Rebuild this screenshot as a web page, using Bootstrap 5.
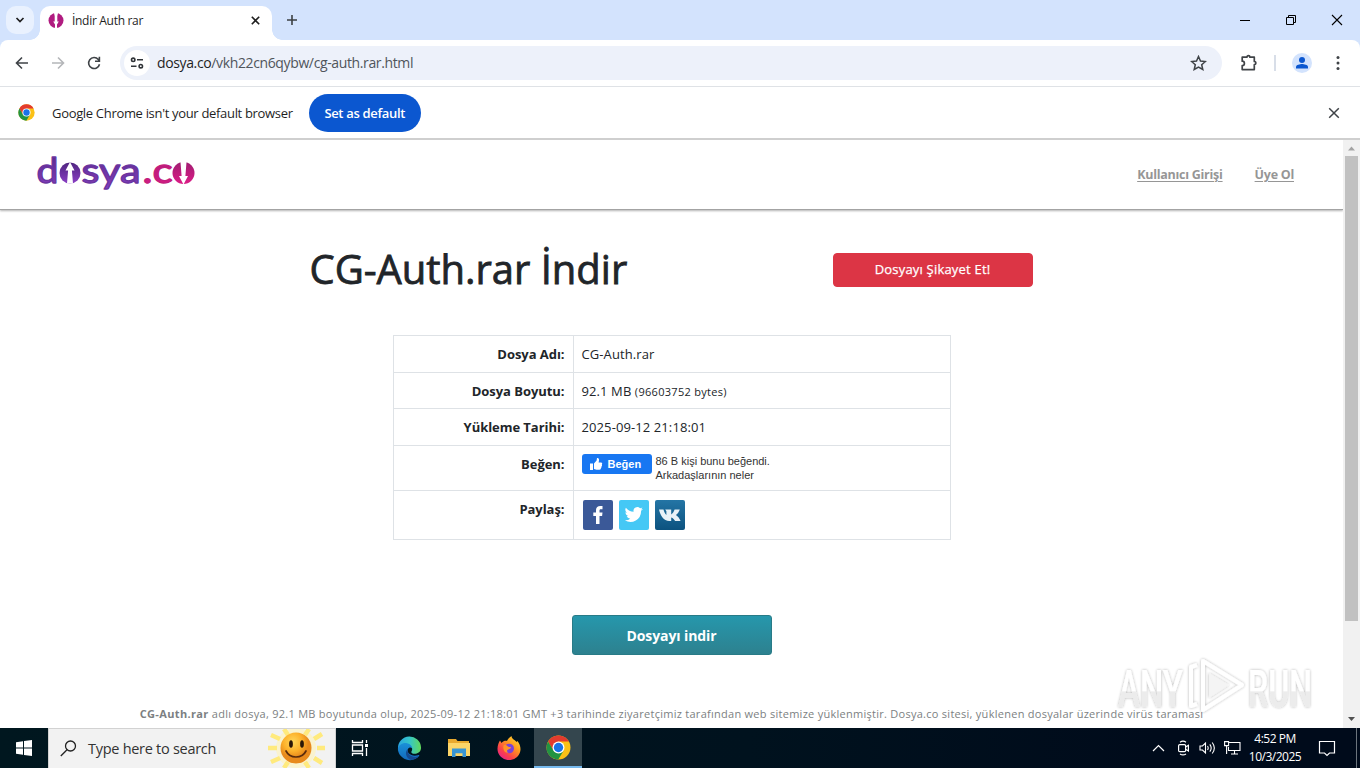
<!DOCTYPE html>
<html lang="tr">
<head>
  <meta charset="UTF-8" />
  <meta name="viewport" content="width=device-width, initial-scale=1.0"/>
  <title>İndir Auth rar</title>
  <link href="https://cdn.jsdelivr.net/npm/bootstrap@5.3.3/dist/css/bootstrap.min.css" rel="stylesheet"/>
  <style>
    body {
      font-family: "Open Sans", "Noto Sans", sans-serif;
      font-size: 13px;
      color: #212529;
      height: 768px;
      overflow: hidden;
    }
    svg {
      display: block;
      flex-shrink: 0;
    }

    /* browser tabs */
    .tab-strip {
      height: 40px;
      background: #d3e3fd;
      padding-left: 6px;
    }
    .tab-search {
      width: 28px;
      height: 28px;
      margin-top: 6px;
      border-radius: 10px;
      background: #e9f1fe;
    }
    .browser-tab {
      width: 232px;
      height: 34px;
      margin: 6px 0 0 6px;
      padding: 0 11px 5px 8px;
      background: #fff;
      border-radius: 10px 10px 0 0;
      font-size: 12px;
      letter-spacing: -.3px;
      color: #1f1f1f;
      position: relative;
    }
    .browser-tab::before, .browser-tab::after {
      content: "";
      position: absolute;
      bottom: 0;
      width: 10px;
      height: 10px;
    }
    .browser-tab::before {
      left: -10px;
      background: radial-gradient(circle at 0 0, transparent 9.5px, #fff 10px);
    }
    .browser-tab::after {
      right: -10px;
      background: radial-gradient(circle at 100% 0, transparent 9.5px, #fff 10px);
    }
    .new-tab {
      margin-left: 14px;
    }
    .window-buttons {
      gap: 34px;
      padding-right: 17px;
    }

    /* address bar */
    .toolbar-wrap {
      background: #d3e3fd;
    }
    .tool-row {
      height: 47px;
      background: #fff;
      border-bottom: 1px solid #dfe2e6;
      border-radius: 8px 8px 0 0;
      padding: 0 14px;
    }
    .nav-icons {
      gap: 20px;
    }
    .address {
      width: 1102px;
      height: 34px;
      border-radius: 17px;
      background: #edf1fa;
      margin: 0 17px 0 18px;
      padding: 0 15px 0 4px;
      font-size: 14px;
      letter-spacing: -.37px;
      color: #50555b;
    }
    .address span {
      padding-bottom: 1px;
    }
    .address b {
      font-weight: 400;
      color: #1f1f1f;
    }
    .site-info {
      width: 26px;
      height: 26px;
      background: #fff;
      margin-right: 7px;
    }
    .tool-split {
      width: 2px;
      height: 16px;
      background: #d8dee8;
      margin: 0 16px 0 15px;
    }
    .kebab {
      margin-left: 24px;
    }
    .info-bar {
      height: 53px;
      padding: 0 20px 0 18px;
      border-bottom: 2px solid #cfcfcf;
      letter-spacing: -.32px;
      color: #1f1f1f;
    }
    .info-bar span {
      padding-top: 2px;
      margin-left: 17px;
    }
    .btn-default-browser {
      width: 112px;
      height: 38px;
      padding: 2px 0 0;
      border: 0;
      background: #0b57d0;
      color: #fff;
      font-size: 13px;
      font-weight: 600;
      letter-spacing: -.33px;
    }

    /* web page */
    .viewport {
      height: 588px;
      overflow: hidden;
    }
    .site-header {
      height: 70px;
      padding: 0 49px 0 36px;
      border-bottom: 1px solid #a3a3a3;
      box-shadow: 0 1px 2px rgba(0,0,0,.3);
    }
    .site-header nav {
      gap: 32px;
      padding-top: 2px;
    }
    .site-header a {
      color: #969696;
      font-weight: 700;
      font-size: 12.5px;
      letter-spacing: -.26px;
      text-underline-offset: 2px;
    }
    .file-area {
      width: 724px;
      margin: 35px auto 0;
    }
    .title-row {
      margin: 0 1px 0 0;
    }
    .file-area h1 {
      font-size: 40px;
      font-weight: 500;
      line-height: 48px;
      letter-spacing: -.03px;
      margin: 0;
      -webkit-text-stroke: .8px #212529;
    }
    .btn-report {
      width: 200px;
      height: 34px;
      padding: 0;
      margin-top: 2px;
      font-size: 13px;
      font-weight: 500;
      letter-spacing: .2px;
      border-radius: 4px;
      -webkit-text-stroke: .25px #fff;
    }
    .file-table {
      width: 558px;
      margin: 42px auto 0;
      font-size: 13px;
      line-height: 19.5px;
      border-color: #dee2e6;
    }
    .file-table th {
      width: 180px;
      text-align: right;
      vertical-align: top;
      letter-spacing: -.05px;
    }
    .file-table th, .file-table .file-value {
      padding: 9px 8px 7px;
    }
    .file-table td {
      letter-spacing: .1px;
    }
    .file-table small {
      font-size: 11px;
      line-height: 11px;
      letter-spacing: .3px;
    }
    .like-row {
      height: 28px;
    }
    .like-btn {
      width: 70px;
      height: 20px;
      padding-left: 7px;
      gap: 5px;
      border-radius: 3px;
      background: #1877f2;
      color: #fff;
      font: bold 11px "Liberation Sans", sans-serif;
      letter-spacing: 0;
    }
    .like-text {
      font: 11px/14px "Liberation Sans", sans-serif;
      letter-spacing: 0;
      color: #333;
      margin-left: 4px;
    }
    .share-row {
      gap: 6px;
      padding: 1px 0 0 1px;
      height: 32px;
    }
    .btn-download {
      width: 200px;
      height: 40px;
      margin-top: 75px;
      padding: 1px 0 0;
      border: 1px solid #287b87;
      border-radius: 3px;
      background: linear-gradient(#2697ac, #2d818f);
      color: #fff;
      font-size: 14px;
      font-weight: 700;
      letter-spacing: -.1px;
    }
    .file-note {
      margin-top: 50px;
      font-size: 11px;
      line-height: 17px;
      letter-spacing: .27px;
      color: #7c7f82;
      white-space: nowrap;
      text-align: center;
    }
    .file-note b {
      letter-spacing: .35px;
    }
    .scroll-track {
      width: 17px;
      background: #f1f1f1;
      padding: 0 2px;
    }
    .scroll-thumb {
      height: 465px;
      background: #c1c1c1;
    }
    .watermark {
      position: absolute;
      left: 1108px;
      top: 650px;
      opacity: .9;
    }

    /* taskbar */
    .win-taskbar {
      height: 40px;
      background: linear-gradient(90deg, #00171f, #00121e 55%, #000b1b 85%);
      color: #fff;
      position: relative;
    }
    .start-btn, .task-item {
      width: 48px;
    }
    .task-item {
      margin-left: 1.6px;
      height: 40px;
    }
    .task-item.open-app {
      background: #34464e;
      border-bottom: 2px solid #76b9ed;
    }
    .search-field {
      width: 288px;
      background: #f2f2f2;
      border: 1px solid #d2d2d2;
      border-bottom: 0;
      padding-left: 11px;
      color: #333;
      font-size: 14.5px;
      letter-spacing: -.28px;
    }
    .search-field span {
      margin-left: 11px;
    }
    .tray-icons {
      gap: 8px;
    }
    .clock {
      width: 68px;
      font-size: 12px;
      line-height: 18px;
      letter-spacing: -.5px;
      text-align: center;
    }
    .notify {
      margin: 0 20px 0 9px;
    }
    .show-desktop {
      width: 4px;
    }
  </style>
</head>
<body>
  <svg width="0" height="0" class="position-absolute">
    <defs>
      <symbol id="chromeLogo" viewBox="0 0 48 48">
        <circle cx="24" cy="24" r="23" fill="#fbc116"/>
        <path d="M4 12.500A23 23 0 0 1 44 12.500H24L14 29.800z" fill="#e33b2e"/>
        <path d="M4 12.500A23 23 0 0 0 23.500 47L34 29.700 14 29.500z" fill="#229342"/>
        <circle cx="24" cy="24" r="11.500" fill="#fff"/>
        <circle cx="24" cy="24" r="9" fill="#1a73e8"/>
      </symbol>
      <linearGradient id="purple" x1="0" y1="0" x2="0" y2="1">
        <stop offset="0" stop-color="#4f2580"/><stop offset="1" stop-color="#8a3fc4"/>
      </linearGradient>
      <linearGradient id="pink" x1="0" y1="0" x2="0" y2="1">
        <stop offset="0" stop-color="#a01d72"/><stop offset="1" stop-color="#dc1c86"/>
      </linearGradient>
    </defs>
  </svg>

  <!-- tab strip -->
  <div class="tab-strip d-flex">
    <div class="tab-search d-flex align-items-center justify-content-center">
      <svg width="10" height="8" viewBox="0 0 10 8"><path d="M1.500 2l3.500 3.500L8.500 2" fill="none" stroke="#1f1f1f" stroke-width="1.700"/></svg>
    </div>
    <div class="browser-tab d-flex align-items-center">
      <svg width="16" height="16" viewBox="0 0 16 16">
        <circle cx="8" cy="7.500" r="7.500" fill="#b01c80"/>
        <path d="M6 0h4L9.300 3v5.500h1.500L9 11.500V15H7v-3.500L5.200 8.500h1.500V3z" fill="#fff"/>
      </svg>
      <span class="ms-2 flex-grow-1">İndir Auth rar</span>
      <svg width="11" height="11" viewBox="0 0 11 11"><path d="M1.800 1.800l7.400 7.400M9.200 1.800L1.800 9.200" stroke="#1f1f1f" stroke-width="1.600"/></svg>
    </div>
    <svg class="new-tab align-self-center" width="12" height="12" viewBox="0 0 12 12"><path d="M6 1v10M1 6h10" stroke="#3c4043" stroke-width="1.600"/></svg>
    <div class="window-buttons ms-auto d-flex align-items-center">
      <svg width="12" height="12" viewBox="0 0 12 12"><path d="M1 6.500h10" stroke="#000"/></svg>
      <svg width="12" height="12" viewBox="0 0 12 12"><path d="M1.500 3.500h7v7h-7zM3.500 3.500v-2h7v7h-2" fill="none" stroke="#000"/></svg>
      <svg width="12" height="12" viewBox="0 0 12 12"><path d="M1 1l10 10M11 1L1 11" stroke="#000" stroke-width="1.100"/></svg>
    </div>
  </div>

  <!-- address row -->
  <div class="toolbar-wrap">
    <div class="tool-row d-flex align-items-center">
      <div class="nav-icons d-flex">
        <svg width="16" height="16" viewBox="0 0 16 16" fill="none" stroke="#3f4347" stroke-width="1.600"><path d="M14 8H3M8 2.500L2.500 8 8 13.500"/></svg>
        <svg width="16" height="16" viewBox="0 0 16 16" fill="none" stroke="#b4b6b9" stroke-width="1.600"><path d="M2 8h11M8 2.500L13.500 8 8 13.500"/></svg>
        <svg width="16" height="16" viewBox="0 0 16 16" fill="none" stroke="#3f4347" stroke-width="1.600"><path d="M13.500 9.200A5.500 5.500 0 1 1 12.300 4.400L13.300 5.800M13.400 1.800v4.500H9"/></svg>
      </div>
      <div class="address d-flex align-items-center">
        <div class="site-info rounded-circle d-flex align-items-center justify-content-center">
          <svg width="14" height="12" viewBox="0 0 14 12" fill="none" stroke="#303438" stroke-width="1.600"><circle cx="3.200" cy="2.800" r="1.700"/><path d="M7 2.800h6M1 9.200h5.500"/><circle cx="10.800" cy="9.200" r="1.700"/></svg>
        </div>
        <span class="flex-grow-1"><b>dosya.co</b>/vkh22cn6qybw/cg-auth.rar.html</span>
        <svg width="17" height="16" viewBox="0 0 17 16"><path d="M8.500 1.500l2 4.500 4.900.5-3.700 3.200 1.100 4.800-4.300-2.500-4.300 2.500 1.100-4.800L1.600 6.500 6.500 6z" fill="none" stroke="#3f4347" stroke-width="1.500"/></svg>
      </div>
      <svg width="20" height="20" viewBox="0 0 20 20"><path d="M3.200 4.200h4.700a1.500 1.500 0 0 1 3 0h4.400v4.300a1.600 1.600 0 0 1 0 3.200v4.900H3.200v-4a2.200 2.200 0 0 0 0-4.400z" fill="none" stroke="#3f4347" stroke-width="1.700" stroke-linejoin="round"/></svg>
      <div class="tool-split"></div>
      <svg width="20" height="20" viewBox="0 0 20 20"><circle cx="10" cy="10" r="10" fill="#d3e3fd"/><circle cx="10" cy="7" r="3" fill="#0b57d0"/><path d="M4 15.500v-1.600c0-2 4-2.900 6-2.900s6 .9 6 2.900v1.600z" fill="#0b57d0"/></svg>
      <svg class="kebab" width="4" height="16" viewBox="0 0 4 16" fill="#3f4347"><circle cx="2" cy="2.500" r="1.500"/><circle cx="2" cy="8" r="1.500"/><circle cx="2" cy="13.500" r="1.500"/></svg>
    </div>
  </div>

  <div class="info-bar d-flex align-items-center">
    <svg width="17" height="17"><use href="#chromeLogo"/></svg>
    <span>Google Chrome isn't your default browser</span>
    <button class="btn btn-default-browser rounded-pill ms-3">Set as default</button>
    <svg class="ms-auto" width="12" height="12" viewBox="0 0 12 12"><path d="M1.200 1.200l9.600 9.600M10.800 1.200L1.200 10.800" stroke="#3f4347" stroke-width="1.500"/></svg>
  </div>

  <!-- page content -->
  <div class="viewport d-flex">
    <div class="flex-grow-1 overflow-hidden">
      <header class="site-header d-flex align-items-center">
        <svg width="164" height="60" viewBox="36.500 145.500 164 60" font-family="Lato, sans-serif" font-size="35" stroke-width="1.300" stroke-linejoin="round">
          <g fill="url(#purple)" stroke="#6a35a0">
            <text x="37" y="183.500" textLength="22" lengthAdjust="spacingAndGlyphs">d</text>
            <text x="82" y="183.500" textLength="59" lengthAdjust="spacingAndGlyphs">sya</text>
            <circle cx="70.500" cy="173.500" r="10.500" stroke="none"/>
          </g>
          <g fill="url(#pink)" stroke="#c41c7e">
            <text x="143" y="183.500" textLength="30" lengthAdjust="spacingAndGlyphs">.c</text>
            <circle cx="184" cy="173.500" r="11" stroke="none"/>
          </g>
          <path d="M70.500 162.500l4.500 8.500h-2.600l1.100 13h-6l1.100-13H66z" fill="#fff"/>
          <path d="M184 185l-4.500-8.500h2.600l-1.100-14h6l-1.100 14h2.600z" fill="#fff"/>
        </svg>
        <nav class="ms-auto d-flex">
          <a href="#">Kullanıcı Girişi</a>
          <a href="#">Üye Ol</a>
        </nav>
      </header>

      <main class="file-area">
        <div class="title-row d-flex justify-content-between align-items-center">
          <h1>CG-Auth.rar İndir</h1>
          <button class="btn btn-danger btn-report">Dosyayı Şikayet Et!</button>
        </div>
        <table class="table table-bordered file-table">
          <tr><th>Dosya Adı:</th><td class="file-value">CG-Auth.rar</td></tr>
          <tr><th>Dosya Boyutu:</th><td class="file-value">92.1 MB <small>(96603752 bytes)</small></td></tr>
          <tr><th>Yükleme Tarihi:</th><td class="file-value">2025-09-12 21:18:01</td></tr>
          <tr>
            <th>Beğen:</th>
            <td>
              <div class="like-row d-flex">
                <span class="like-btn d-flex align-items-center">
                  <svg width="14" height="14" viewBox="0 0 14 14" fill="#fff"><path d="M1 6.500h3V13H1zM5 6.500L7.600 3.500 8 1c1.600-.3 2.300 1 2 2.500L9.600 5.500H12c1.300 0 1.500 1.300.8 2 .5.700.3 1.500-.3 1.900.2.700 0 1.300-.6 1.600.1 1-.4 1.700-1.400 1.700H7.500L5 12z"/></svg>
                  Beğen
                </span>
                <span class="like-text">86 B kişi bunu beğendi.<br>Arkadaşlarının neler</span>
              </div>
            </td>
          </tr>
          <tr>
            <th>Paylaş:</th>
            <td>
              <div class="share-row d-flex">
                <svg width="30" height="30" viewBox="0 0 30 30"><rect width="30" height="30" rx="2" fill="#3b5998"/><path d="M13 24v-8h-2.700v-3.500H13v-2.300C13 7.300 14.700 6 17.200 6h2.300v3.300h-1.700c-1.100 0-1.300.6-1.300 1.400v1.800h3l-.4 3.500h-2.600v8z" fill="#fff"/></svg>
                <svg width="30" height="30" viewBox="0 0 30 30"><rect width="30" height="30" rx="2" fill="#45c8f5"/><path transform="translate(5 5) scale(.8)" d="M23.600 4.900c-.8.400-1.700.6-2.600.7 1-.6 1.700-1.500 2-2.500-.9.500-1.900.9-2.900 1.100a4.700 4.700 0 0 0-8.100 4.200C8.100 8.200 4.700 6.400 2.400 3.500a4.700 4.700 0 0 0 1.500 6.200c-.8 0-1.500-.2-2.100-.6 0 2.300 1.600 4.200 3.700 4.700-.7.200-1.400.2-2.100.1.600 1.800 2.300 3.200 4.400 3.200A9.300 9.300 0 0 1 1 19.100a13.200 13.200 0 0 0 20.300-11.800c.9-.7 1.700-1.500 2.300-2.400z" fill="#fff"/></svg>
                <svg width="30" height="30" viewBox="0 0 30 30"><defs><linearGradient id="vkBlue" x2="0" y2="1"><stop offset="0" stop-color="#2475a5"/><stop offset="1" stop-color="#0c527f"/></linearGradient></defs><rect width="30" height="30" rx="2" fill="url(#vkBlue)"/><path d="M4 9.500h4.500c.6 2.500 1.700 4.500 2.900 5.600V11.300L10.200 9.500h6v5c1.600-1 2.600-2.900 3.400-5h5.200c-.7 2.200-2.300 4.300-3.900 5.600 2.200 1.500 3.600 3.400 4.700 5.900h-5.500c-.8-1.700-2-3-3.900-3.600V21h-1.900C8.600 21 5.300 15.500 4 9.500z" fill="#e9f1f7"/></svg>
              </div>
            </td>
          </tr>
        </table>
      </main>
      <div class="text-center">
        <button class="btn btn-download">Dosyayı indir</button>
      </div>
      <div class="file-note"><b>CG-Auth.rar</b> adlı dosya, 92.1 MB boyutunda olup, 2025-09-12 21:18:01 GMT +3 tarihinde ziyaretçimiz tarafından web sitemize yüklenmiştir. Dosya.co sitesi, yüklenen dosyalar üzerinde virüs taraması</div>
    </div>
    <div class="scroll-track d-flex flex-column">
      <svg width="13" height="16" viewBox="0 0 13 16"><path d="M3 10.500l3.500-4 3.500 4z" fill="#a3a3a3"/></svg>
      <div class="scroll-thumb"></div>
      <svg class="mt-auto" width="13" height="16" viewBox="0 0 13 16"><path d="M3 5l3.500 4L10 5z" fill="#505050"/></svg>
    </div>
  </div>

  <svg class="watermark" width="210" height="75" viewBox="1108 650 210 75" font-family="Roboto, sans-serif" font-weight="500" font-size="52">
    <defs>
      <filter id="soft" x="-10%" y="-20%" width="120%" height="140%"><feDropShadow dx="0" dy="0" stdDeviation="1.800" flood-color="#000" flood-opacity=".34"/></filter>
      <linearGradient id="glass" x2="0" y2="1"><stop offset=".52" stop-color="#fff"/><stop offset=".54" stop-color="#ebebeb"/></linearGradient>
    </defs>
    <g filter="url(#soft)" fill="url(#glass)">
      <text x="1118" y="707" textLength="65" lengthAdjust="spacingAndGlyphs">ANY</text>
      <text x="1248" y="707" textLength="64" lengthAdjust="spacingAndGlyphs">RUN</text>
      <path d="M1203 661L1242 685 1203 710zM1197 665l-6 2v39l6-2" fill="none" stroke="#fff" stroke-width="4" stroke-linejoin="round"/>
      <path d="M1209 673l20 12-20 13z" fill="#f3f3f3"/>
    </g>
  </svg>

  <!-- taskbar -->
  <footer class="win-taskbar d-flex align-items-stretch">
    <div class="start-btn d-flex align-items-center justify-content-center">
      <svg width="16" height="16" viewBox="0 0 16 16" fill="#fff"><path d="M0 2.200L7 1.200v6.300H0zM8 1.100L16 0v7.500H8zM0 8.500h7v6.300l-7-1zM8 8.500h8V16l-8-1.100z"/></svg>
    </div>
    <div class="search-field d-flex align-items-center">
      <svg width="17" height="17" viewBox="0 0 17 17" fill="none" stroke="#222" stroke-width="1.300"><circle cx="10.500" cy="6" r="5"/><path d="M7 9.700L.8 16"/></svg>
      <span>Type here to search</span>
      <svg class="ms-auto me-2" width="60" height="39" viewBox="0 0 60 39">
        <defs><radialGradient id="face" cx=".4" cy=".3"><stop offset="0" stop-color="#ffd75a"/><stop offset=".6" stop-color="#fdb22b"/><stop offset="1" stop-color="#e88a1c"/></radialGradient></defs>
        <circle cx="29" cy="19" r="20" fill="#fff3b5" opacity=".6"/>
        <g stroke="#ffea7d" stroke-width="4.500"><path d="M1 19h9M50 19h8M4 6l9 4M47 29l8 5M4 33l9-4M47 10l8-5M17 0l4 6M42 0l-4 6M17 39l4-6M42 39l-4-6"/></g>
        <circle cx="29" cy="19" r="15.500" fill="url(#face)"/>
        <ellipse cx="24" cy="15" rx="1.900" ry="3.800" fill="#2b1708"/><ellipse cx="35" cy="15" rx="1.900" ry="3.800" fill="#2b1708"/>
        <path d="M19 22c4 8 16 8 20 0" fill="none" stroke="#5a2c0c" stroke-width="1.700" stroke-linecap="round"/>
      </svg>
    </div>
    <div class="task-item d-flex align-items-center justify-content-center ms-0">
      <svg width="18" height="16" viewBox="0 0 18 16" fill="none" stroke="#fff" stroke-width="1.300"><path d="M1.500 0v2.500h10V0M1.500 16v-2.500h10V16M1.500 5h10v6h-10zM15.500 0v3M15.500 8v8"/><path d="M14 4h3v3h-3z" fill="#fff" stroke="none"/></svg>
    </div>
    <div class="task-item d-flex align-items-center justify-content-center">
      <svg width="25" height="25" viewBox="0 0 26 26">
        <defs>
          <linearGradient id="edgeTop"><stop offset="0" stop-color="#2aa5e0"/><stop offset=".5" stop-color="#35c6c9"/><stop offset="1" stop-color="#61d95b"/></linearGradient>
          <linearGradient id="edgeLow" x2="0" y2="1"><stop offset="0" stop-color="#1a91d8"/><stop offset="1" stop-color="#1268bd"/></linearGradient>
        </defs>
        <path d="M1 13A12 12 0 0 1 25 12c.3 4-3 6.500-6.500 6.500-2.500 0-4.300-1.200-3.300-2.700 1.700-2.500-.2-5.800-4.200-5.800C6 10 2 12 1 15z" fill="url(#edgeTop)"/>
        <path d="M1 13c.4-3.500 5-6.500 9.500-5.500 3.500.8 5.500 3.300 5.400 5.500-1-1.500-3.400-1.700-4.500.5-1.800 3.600 3.300 8.500 10.500 6.500 1-.3 1.700-.1 1 .9C20 25 14 26 9.500 24.500 4 22.500.7 17.500 1 13z" fill="url(#edgeLow)"/>
        <path d="M11.400 13.500c-3.600 2.600-2.600 9 3.100 11.400 3 0 6.400-1.600 8.400-4-6.500 3-13.300-2.500-11.500-7.400z" fill="#154a91"/>
      </svg>
    </div>
    <div class="task-item d-flex align-items-center justify-content-center">
      <svg width="22" height="20" viewBox="0 0 22 20"><path d="M0 1h8l1.500 2H21v4H0z" fill="#e8a92e"/><path d="M0 5h22v13H0z" fill="#fbd568"/><path d="M4 10.500h14V19h-3.500v-3.800h-7V19H4z" fill="#3795d4"/></svg>
    </div>
    <div class="task-item d-flex align-items-center justify-content-center">
      <svg width="24" height="24" viewBox="0 0 24 24">
        <defs><linearGradient id="foxFire" x1="1" y1="0" x2=".2" y2="1"><stop offset="0" stop-color="#ffe83d"/><stop offset=".4" stop-color="#ff9c1d"/><stop offset=".75" stop-color="#fb4149"/><stop offset="1" stop-color="#e6208c"/></linearGradient></defs>
        <path d="M3 4.500L4.500 7C6 5 8.500 4.600 10 5c.7-2 2.500-3.500 4.500-5 0 3 4 4 5 6l1-1c2 2.500 3 5.500 3 8.200A11.500 11 0 0 1 .5 13C.4 9.500 1.800 6.500 3 4.500z" fill="url(#foxFire)"/>
        <circle cx="12.200" cy="12.500" r="4.800" fill="#7a42d8"/>
        <path d="M6.500 9.500c2-1 3.500 0 4.500 1 1 .8 2.800.2 3 1-.2 1.200-2.500 1.500-3.500 2.600-1 1-.5 2 1 2-2.500 2-6-1.400-5-6.600z" fill="#ff9428"/>
      </svg>
    </div>
    <div class="task-item open-app d-flex align-items-center justify-content-center">
      <svg width="25" height="25"><use href="#chromeLogo"/></svg>
    </div>

    <div class="ms-auto d-flex align-items-center">
      <div class="tray-icons d-flex align-items-center">
        <svg class="me-1" width="13" height="8" viewBox="0 0 13 8"><path d="M1 7l5.500-5.500L12 7" fill="none" stroke="#fff" stroke-width="1.200"/></svg>
        <svg width="14" height="16" viewBox="0 0 14 16" fill="none" stroke="#fff" stroke-width="1.200"><rect x="1.600" y="4.600" width="7" height="7" rx="1.200"/><path d="M8.600 7l2.800-1.700v5.600L8.600 9.200M3 2.200Q6 .2 9 2.200M3 13.900Q6 15.900 9 13.900"/></svg>
        <svg width="17" height="14" viewBox="0 0 17 14" fill="none" stroke="#fff" stroke-width="1.100"><path d="M1 5h2.500l3-3v10l-3-3H1zM8.500 5q1.400 2 0 4M10.800 3.300q2.800 3.700 0 7.400M13.200 1.500q4.300 5.500 0 11"/></svg>
        <svg width="17" height="14" viewBox="0 0 17 14" fill="none" stroke="#fff" stroke-width="1.100"><path d="M5 1.500h11v8H4.500V6M7 13h7M10.500 9.500V13M.6.600h4v4h-4zM2.600 4.600V13"/></svg>
      </div>
      <div class="clock">4:52 PM<br>10/3/2025</div>
      <svg class="notify" width="18" height="17" viewBox="0 0 18 17"><path d="M1.500 1.500h15v11.500H11.500L9 15.500 6.500 13h-5z" fill="none" stroke="#fff" stroke-width="1.200"/></svg>
      <div class="show-desktop border-start border-secondary h-100"></div>
    </div>
  </footer>
  <script src="https://cdn.jsdelivr.net/npm/bootstrap@5.3.3/dist/js/bootstrap.bundle.min.js"></script>
</body>
</html>
